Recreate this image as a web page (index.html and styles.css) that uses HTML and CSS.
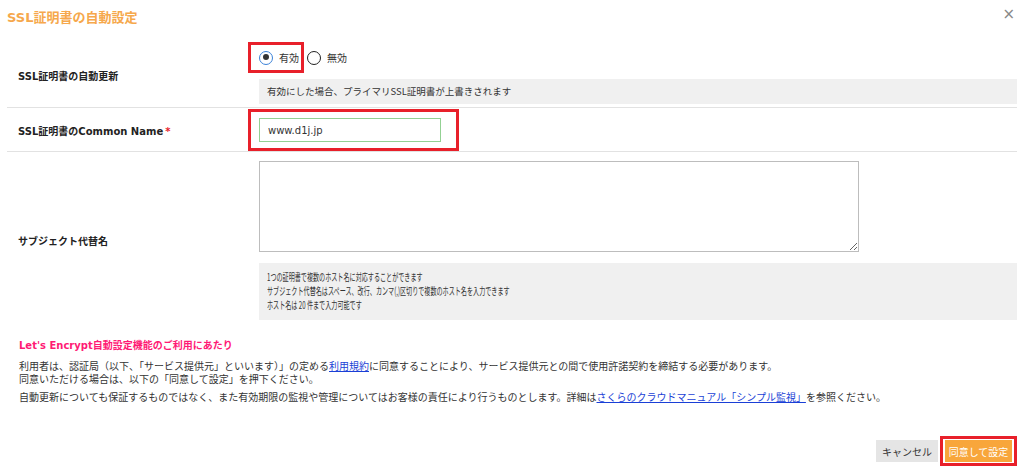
FILE: index.html
```html
<!DOCTYPE html>
<html lang="ja">
<head>
    <meta charset="UTF-8">
    <title>SSL証明書の自動設定</title>
    <link rel="stylesheet" href="styles.css">
</head>
<body>
    <div class="dialog">
        <div class="dialog-header">
            <h1>SSL証明書の自動設定</h1>
            <span class="close">&times;</span>
        </div>

        <div class="form">
            <div class="row row-auto">
                <div class="label">SSL証明書の自動更新</div>
                <div class="field">
                    <div class="radios">
                        <label class="mark mark-radio"><input type="radio" name="auto" checked> 有効</label>
                        <label class="radio-off"><input type="radio" name="auto"> 無効</label>
                    </div>
                    <div class="note">有効にした場合、プライマリSSL証明書が上書きされます</div>
                </div>
            </div>

            <div class="row row-cn">
                <div class="label">SSL証明書のCommon Name<span class="req">*</span></div>
                <div class="field">
                    <div class="mark mark-input">
                        <input type="text" class="cn-input" value="www.d1j.jp">
                    </div>
                </div>
            </div>

            <div class="row row-san">
                <div class="label">サブジェクト代替名</div>
                <div class="field">
                    <textarea class="san"></textarea>
                    <div class="note note-multi">
                        <div class="condensed">
                            1つの証明書で複数のホスト名に対応することができます<br>
                            サブジェクト代替名はスペース、改行、カンマ(,)区切りで複数のホスト名を入力できます<br>
                            ホスト名は 20 件まで入力可能です
                        </div>
                    </div>
                </div>
            </div>
        </div>

        <div class="terms">
            <h2>Let's Encrypt自動設定機能のご利用にあたり</h2>
            <p>利用者は、認証局（以下、「サービス提供元」といいます）」の定める<a href="#">利用規約</a>に同意することにより、サービス提供元との間で使用許諾契約を締結する必要があります。<br>同意いただける場合は、以下の「同意して設定」を押下ください。</p>
            <p>自動更新についても保証するものではなく、また有効期限の監視や管理についてはお客様の責任により行うものとします。詳細は<a href="#">さくらのクラウドマニュアル「シンプル監視」</a>を参照ください。</p>
        </div>

        <div class="footer">
            <button class="btn btn-cancel">キャンセル</button>
            <div class="mark mark-btn">
                <button class="btn btn-agree">同意して設定</button>
            </div>
        </div>
    </div>
</body>
</html>
```

FILE: styles.css
```css
body {
    margin: 0;
    background: #fff;
    font-family: "DejaVu Sans", "Noto Sans CJK JP", sans-serif;
    font-size: 10px;
    color: #333;
}

.dialog {
    width: 1010px;
    padding: 0 7px;
}

.dialog-header {
    display: flex;
    justify-content: space-between;
    align-items: center;
    height: 32px;
}

.dialog-header h1 {
    margin: 0;
    font-size: 13px;
    font-weight: bold;
    color: #f6a84c;
    font-family: "DejaVu Sans", "Noto Sans CJK JP", sans-serif;
}

.close {
    font-size: 15px;
    color: #888;
    padding-right: 2px;
    margin-top: -4px;
}

.form {
    margin-top: 5px;
}

.row {
    display: flex;
    align-items: center;
    border-bottom: 1px solid #e2e2e2;
}

.row-san {
    border-bottom: none;
}

.label {
    flex-shrink: 0;
    width: 241px;
    padding-left: 11px;
    font-weight: bold;
    color: #222;
}

.req {
    color: #e8202a;
    margin-left: 2px;
}

.field {
    flex: 1;
    min-width: 0;
}

.row-auto {
    padding: 5px 0 3px;
}

.row-auto .label {
    padding-top: 4px;
}

.row-cn {
    padding-top: 1px;
}

.row-san {
    padding: 9px 0 2px;
}

.mark {
    border: 3px solid #e8202a;
    box-sizing: border-box;
}

.radios {
    display: flex;
    align-items: center;
    margin-left: -11px;
}

.radios label {
    display: flex;
    align-items: center;
    gap: 6px;
    color: #333;
}

.mark-radio {
    height: 31px;
    padding: 0 2px 0 8px;
}

.radio-off {
    margin-left: 3px;
}

.radios input {
    appearance: none;
    margin: 0;
    width: 14px;
    height: 14px;
    border: 1px solid #222;
    border-radius: 50%;
    box-sizing: border-box;
    position: relative;
}

.radios input:checked {
    border-color: #3c82d8;
    border-width: 1.5px;
}

.radios input:checked::after {
    content: "";
    position: absolute;
    left: 2.5px;
    top: 2.5px;
    width: 6px;
    height: 6px;
    border-radius: 50%;
    background: #333;
}

.note {
    background: #f0f0f0;
    margin-top: 6px;
    height: 25px;
    line-height: 25px;
    padding-left: 8px;
    font-size: 9.5px;
    font-family: "Noto Sans CJK JP", sans-serif;
}

.mark-input {
    display: inline-block;
    margin-left: -11px;
    padding: 6px 15px 6px 8px;
}

.cn-input {
    display: block;
    width: 182px;
    height: 24px;
    box-sizing: border-box;
    border: 1px solid #93d193;
    padding: 0 8px;
    font-family: "DejaVu Sans", sans-serif;
    font-size: 10px;
    color: #333;
    outline: none;
}

.san {
    display: block;
    width: 600px;
    height: 91px;
    box-sizing: border-box;
    border: 1px solid #bdbdbd;
    margin: 0;
}

.note-multi {
    margin-top: 11px;
    height: 57px;
    line-height: 14px;
    padding: 7px 0 0 8px;
    box-sizing: border-box;
    overflow: hidden;
}

.condensed {
    font-size: 10.5px;
    width: 800px;
    transform: scaleX(0.58);
    transform-origin: left top;
    color: #333;
}

.terms {
    padding-left: 12px;
    margin-top: 17px;
    font-family: "Noto Sans CJK JP", sans-serif;
}

.terms h2 {
    margin: 0;
    font-size: 10px;
    line-height: 14px;
    font-weight: bold;
    color: #ff1a75;
    font-family: "DejaVu Sans", "Noto Sans CJK JP", sans-serif;
}

.terms p {
    margin: 6px 0 0;
    line-height: 13px;
    color: #333;
}

.terms p + p {
    margin-top: 5px;
}

.terms a {
    color: #1a3fd6;
}

.footer {
    display: flex;
    justify-content: flex-end;
    align-items: center;
    gap: 2px;
    margin-top: 33px;
}

.btn {
    border: none;
    height: 22px;
    padding: 0;
    font-family: "Noto Sans CJK JP", sans-serif;
    font-size: 10px;
}

.btn-cancel {
    width: 62px;
    background: #e5e5e5;
    color: #333;
}

.mark-btn {
    padding: 1px 2px;
    height: 30px;
    display: flex;
    align-items: center;
}

.btn-agree {
    width: 67px;
    background: #f8a63b;
    color: #fff;
}
```
